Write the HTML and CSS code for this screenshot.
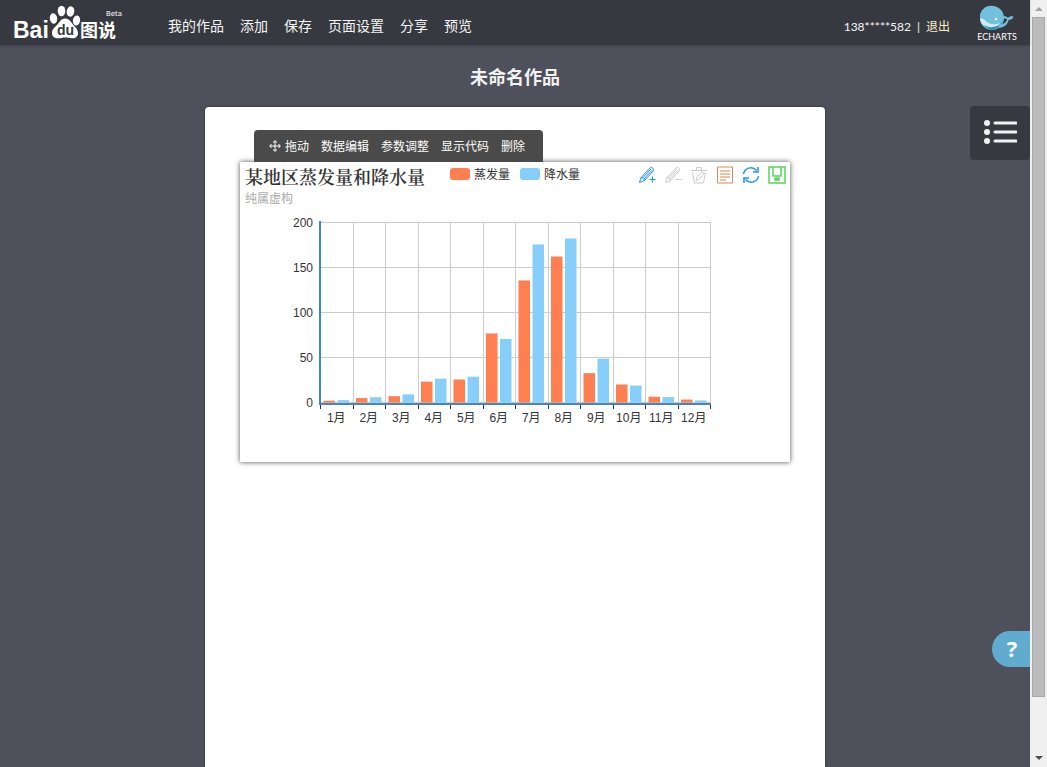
FILE: index.html
```html
<!DOCTYPE html>
<html lang="zh-CN">
<head>
<meta charset="utf-8">
<title>百度图说</title>
<link rel="stylesheet" href="styles.css">
</head>
<body>
<div class="app">
  <header class="topbar">
    <a class="logo" href="#" aria-label="Baidu 图说 Beta">
      <svg width="118" height="45" viewBox="0 0 118 45">
        <g fill="#fff">
          <ellipse cx="45.500" cy="18.500" rx="3.700" ry="5.200" transform="rotate(-8 45.500 18.500)"/>
          <ellipse cx="53.500" cy="11" rx="3.800" ry="5.200"/>
          <ellipse cx="62.500" cy="11.500" rx="3.800" ry="5.200" transform="rotate(12 62.500 11.500)"/>
          <ellipse cx="68.500" cy="20.500" rx="3.600" ry="5" transform="rotate(10 68.500 20.500)"/>
          <path d="M57 18.500c4 0 6 3.500 8 6 3 3.500 5 5.200 5 8.800 0 3.700-2.600 5.200-6 5-2.500-.2-4.500-.8-7-.8s-4.500.8-7 .8c-3.500 0-6-1.700-6-5.300 0-3.600 2.700-5.500 5.500-8.500 2.200-2.500 3.500-6 7.500-6z"/>
        </g>
        <text class="logo-bai" x="5" y="38">Bai</text>
        <text class="logo-du" x="49" y="35">du</text>
        <text class="logo-cn" x="72" y="37">图说</text>
        <text class="logo-beta" x="98" y="16">Beta</text>
      </svg>
    </a>
    <nav class="menu">
      <a href="#">我的作品</a><a href="#">添加</a><a href="#">保存</a><a href="#">页面设置</a><a href="#">分享</a><a href="#">预览</a>
    </nav>
    <div class="account"><span>138*****582</span><span>|</span><a href="#">退出</a></div>
    <a class="echarts" href="#" aria-label="ECharts">
      <svg width="38" height="38" viewBox="0 0 38 38">
        <circle cx="16" cy="14" r="12" fill="#5ba9ca"/>
        <path d="M4 13C4 6 10 1 17 2c7 1 11 6 11 13l-2 3c-6 5-13 2-16-1-2-2-4-3-6-4z" fill="#72bfde"/>
        <path d="M4 14c4 0 5 3 9 5 4 2 8 1 11 0-3 5-10 8-15 4-3-2-5-5-5-9z" fill="#cfeaf4"/>
        <path d="M7 20c4 4 10 4 17 1-4 6-13 6-17-1z" fill="#318bad"/>
        <path d="M23 21c5-1 8-3 8-6-2 0-4-1-5-3 3-.4 5 .2 6 2 1-1.500 3-2.200 5.500-1.500-1 2.600-2.500 3.400-5 3.500-.5 4-3.500 7-9.500 8z" fill="#72bfde"/>
        <circle cx="20" cy="15" r="1.300" fill="#fff"/>
        <text class="echarts-name" x="21" y="36">ECHARTS</text>
      </svg>
    </a>
  </header>

  <main class="workspace">
    <h1 class="work-title">未命名作品</h1>
    <section class="paper">
      <div class="edit-bar">
        <button type="button">
          <svg width="12" height="12" viewBox="0 0 12 12" fill="none" stroke="#fff"><path d="M6 1v10M1 6h10M4 2.500L6 .7l2 1.800M4 9.500l2 1.800 2-1.800M2.500 4L.7 6l1.800 2M9.500 4l1.800 2-1.800 2"/></svg>拖动</button>
        <button type="button">数据编辑</button>
        <button type="button">参数调整</button>
        <button type="button">显示代码</button>
        <button type="button">删除</button>
      </div>
      <article class="chart">
        <div class="chart-head">
          <div class="chart-titles">
            <h2>某地区蒸发量和降水量</h2>
            <p>纯属虚构</p>
          </div>
          <div class="legend">
            <span class="key key-evap">蒸发量</span>
            <span class="key key-rain">降水量</span>
          </div>
          <div class="tools">
            <button type="button" aria-label="辅助线开关"><svg class="blue" viewBox="0 0 18 18"><path d="M1.500 16.500l1.500-5L12.500 1.600c1-1 4 1.400 3 3L6.500 14.500zM3 11.500c1.500 0 3 1.500 3.500 3M4.500 12L13 3M5.700 13.300L14.200 4.200M11.500 13.500h6M14.500 10.500v6"/></svg></button>
            <button type="button" aria-label="删除辅助线"><svg class="gray" viewBox="0 0 18 18"><path d="M1.500 16.500l1.500-5L12.500 1.600c1-1 4 1.400 3 3L6.500 14.500zM3 11.500c1.500 0 3 1.500 3.500 3M4.500 12L13 3M5.700 13.300L14.200 4.200M11.500 13.500h6"/></svg></button>
            <button type="button" aria-label="清空辅助线"><svg class="gray" viewBox="0 0 18 18"><path d="M1 4.500h16M6.500 4V1.500h5V4M2.500 6.500l2 10.500h9l2-10.500M6 14.500l1-3.500 5-5c1-.5 2.500.8 2 2l-5.500 5.500z"/></svg></button>
            <button type="button" aria-label="数据视图"><svg class="orange" viewBox="0 0 18 18"><path d="M1.500 1h15v16h-15zM4 5h10M4 8h10M4 11h10M4 14h6"/></svg></button>
            <button type="button" aria-label="还原"><svg class="azure" viewBox="0 0 18 18"><path d="M1.500 8C2.500 2 10-.5 14.500 4.500M16 1v5h-5M16.500 10c-1 6-8.500 8.500-13 3.500M2 17v-5h5"/></svg></button>
            <button type="button" aria-label="保存为图片"><svg class="green" viewBox="0 0 18 18"><path d="M1 1h16v16H1zM5 1v9h8V1M7 12h4v2H7zM9 12v2"/></svg></button>
          </div>
        </div>
        <svg class="plot" id="plot" viewBox="0 0 550 250" role="img" aria-label="蒸发量和降水量柱状图"></svg>
      </article>
    </section>
  </main>

  <button type="button" class="outline-btn" aria-label="列表">
    <svg width="34" height="26" viewBox="0 0 34 26" fill="#f2f2f2"><circle cx="4" cy="3" r="3"/><circle cx="4" cy="12" r="3"/><circle cx="4" cy="21" r="3"/><path d="M12 3h21M12 12h21M12 21h21" stroke="#f2f2f2" stroke-width="3" stroke-linecap="round"/></svg>
  </button>
  <button type="button" class="help-btn">?</button>
</div>
<div class="scrollbar" aria-hidden="true">
  <i class="arrow arrow-up"></i>
  <i class="thumb"></i>
  <i class="arrow arrow-down"></i>
</div>
<script src="chart.js"></script>
</body>
</html>
```
FILE: styles.css
```css
* { box-sizing: border-box; }

body {
  margin: 0;
  display: flex;
  height: 100vh;
  overflow: hidden;
  background: #4e505b;
  font-family: "Noto Sans", "Noto Sans CJK SC", sans-serif;
  font-size: 12px;
}

a { color: inherit; text-decoration: none; }

button {
  border: 0;
  padding: 0;
  margin: 0;
  background: none;
  color: inherit;
  font: inherit;
  cursor: pointer;
}

svg { display: block; }

.app {
  position: relative;
  flex: 1;
  display: flex;
  flex-direction: column;
  min-width: 0;
}

.topbar {
  display: flex;
  align-items: center;
  height: 45px;
  flex: none;
  padding: 0 16px 0 8px;
  background: #373940;
  color: #f5f5f5;
  box-shadow: 0 1px 2px rgba(0, 0, 0, 0.2);
}

.logo text { fill: #fff; }
.logo .logo-bai { font: bold 23px "Liberation Sans", sans-serif; }
.logo .logo-du { font: bold 14px "Liberation Sans", sans-serif; fill: #373940; }
.logo .logo-cn { font: bold 18px "Noto Sans CJK SC", sans-serif; }
.logo .logo-beta { font: 7px "DejaVu Sans", sans-serif; }

.menu {
  display: flex;
  gap: 16px;
  margin-left: 42px;
  padding-top: 6px;
  font-size: 14px;
  line-height: 20px;
  white-space: nowrap;
}

.account {
  display: flex;
  gap: 6px;
  margin-left: auto;
  padding-top: 8px;
  font-family: Lato, "Noto Sans CJK SC", sans-serif;
  line-height: 18px;
}
.account a { color: #fbeec5; }

.echarts { margin-left: 26px; }
.echarts-name {
  font: 9px Lato, sans-serif;
  fill: #fff;
  text-anchor: middle;
}
.echarts svg { overflow: visible; }

.workspace {
  flex: 1;
  display: flex;
  flex-direction: column;
  align-items: center;
  min-height: 0;
}

.work-title {
  margin: 0;
  padding: 18px 0 16px;
  font-size: 18px;
  line-height: 28px;
  font-weight: bold;
  color: #f2f2f2;
}

.paper {
  flex: 1;
  width: 620px;
  max-width: 100%;
  padding: 23px 35px 0;
  background: #fff;
  border-radius: 4px 4px 0 0;
  box-shadow: 0 0 3px rgba(0, 0, 0, 0.4);
}

.edit-bar {
  position: relative;
  z-index: 1;
  display: flex;
  gap: 12px;
  width: max-content;
  height: 32px;
  margin-left: 14px;
  padding: 0 18px 0 15px;
  background: #4a4a4a;
  border-radius: 4px 4px 0 0;
  color: #fff;
}
.edit-bar button {
  display: flex;
  align-items: center;
  gap: 4px;
}

.chart {
  background: #fff;
  box-shadow: 0 0 5px rgba(0, 0, 0, 0.7);
}

.chart-head {
  display: grid;
  grid-template-columns: 1fr auto 1fr;
  height: 50px;
}

.chart-titles { padding-left: 5px; white-space: nowrap; }
.chart-titles h2 {
  margin: 0;
  padding-top: 2px;
  font: 600 18px/24px "Noto Serif CJK SC", "Noto Sans CJK SC", serif;
  color: #333;
}
.chart-titles p {
  margin: 0;
  line-height: 22px;
  color: #aaa;
}

.legend { display: flex; gap: 10px; padding-top: 3px; }
.key {
  display: flex;
  align-items: center;
  gap: 4px;
  height: 18px;
  color: #333;
}
.key::before {
  content: "";
  width: 20px;
  height: 12px;
  border-radius: 3px;
}
.key-evap::before { background: #ff7f50; }
.key-rain::before { background: #87cefa; }

.tools {
  display: flex;
  justify-content: flex-end;
  align-items: flex-start;
  gap: 8px;
  padding: 4px 4px 0 0;
}
.tools svg {
  width: 18px;
  height: 18px;
  fill: none;
  stroke-width: 1;
}
.tools .blue { stroke: #1e90ff; }
.tools .gray { stroke: #ccc; }
.tools .orange { stroke: #dc8850; }
.tools .azure { stroke: #1e90ff; stroke-width: 1.5; }
.tools .green { stroke: #5bd35b; stroke-width: 1.5; }

.plot { width: 100%; height: auto; }
.plot text {
  font: 12px "Liberation Sans", "Noto Sans CJK SC", sans-serif;
  fill: #333;
}
.plot .value { text-anchor: end; }
.plot .month { text-anchor: middle; }
.plot .grid { stroke: #ccc; fill: none; }
.plot .axis { stroke: #4488bb; stroke-width: 2; fill: none; }
.plot .tick { stroke: #333; fill: none; }
.plot .evap { fill: #ff7f50; }
.plot .rain { fill: #87cefa; }

.outline-btn {
  position: absolute;
  top: 106px;
  right: 0;
  display: grid;
  place-items: center;
  width: 60px;
  height: 54px;
  background: #373940;
  border-radius: 4px;
}

.help-btn {
  position: absolute;
  right: 0;
  bottom: 100px;
  width: 38px;
  height: 36px;
  padding: 0 0 2px 2px;
  background: #61abce;
  border-radius: 18px 0 0 18px;
  color: #fff;
  font: bold 22px "Open Sans", sans-serif;
}

.scrollbar {
  display: flex;
  flex-direction: column;
  align-items: center;
  width: 17px;
  flex: none;
  background: #f0f0f0;
}
.thumb {
  width: 13px;
  height: 680px;
  background: #bcbcbc;
  border: 1px solid #a8a8a8;
}
.arrow { border: 4px solid transparent; }
.arrow-up { margin: 3px 0 6px; border-bottom-color: #a3a3a3; }
.arrow-down { margin: auto 0 3px; border-top-color: #505050; }
```
FILE: chart.js
```js
const evaporation = [2.0, 4.9, 7.0, 23.2, 25.6, 76.7, 135.6, 162.2, 32.6, 20.0, 6.4, 3.3];
const rainfall = [2.6, 5.9, 9.0, 26.4, 28.7, 70.7, 175.6, 182.2, 48.7, 18.8, 6.0, 2.3];
const area = { left: 80, right: 470, top: 10, bottom: 190 };
const plot = document.getElementById("plot");
const band = (area.right - area.left) / 12;
const scale = (area.bottom - area.top) / 200;

function add(name, attrs, text) {
  const el = document.createElementNS("http://www.w3.org/2000/svg", name);
  for (const key in attrs) el.setAttribute(key, attrs[key]);
  if (text !== undefined) el.textContent = text;
  plot.appendChild(el);
}

for (let v = 0; v <= 200; v += 50) {
  const y = area.bottom - v * scale;
  add("path", { class: "grid", d: `M${area.left} ${y + 0.5}H${area.right + 1}` });
  add("text", { class: "value", x: area.left - 7, y: y + 5 }, v);
}
for (let i = 0; i <= 12; i++) {
  const x = Math.round(area.left + i * band) + 0.5;
  add("path", { class: "grid", d: `M${x} ${area.top}V${area.bottom}` });
  add("path", { class: "tick", d: `M${x} ${area.bottom + 2}V${area.bottom + 7}` });
}
evaporation.forEach((value, i) => {
  const x = area.left + i * band;
  [["evap", value, 3.5], ["rain", rainfall[i], 17.5]].forEach(([kind, v, shift]) => {
    add("rect", { class: kind, x: x + shift, y: area.bottom + 0.5 - v * scale, width: 11.5, height: v * scale });
  });
  add("text", { class: "month", x: x + band / 2, y: area.bottom + 20 }, `${i + 1}月`);
});
add("path", { class: "axis", d: `M${area.left} ${area.top - 1}V${area.bottom + 2}M${area.left - 1} ${area.bottom + 2}H${area.right + 1}` });
```
